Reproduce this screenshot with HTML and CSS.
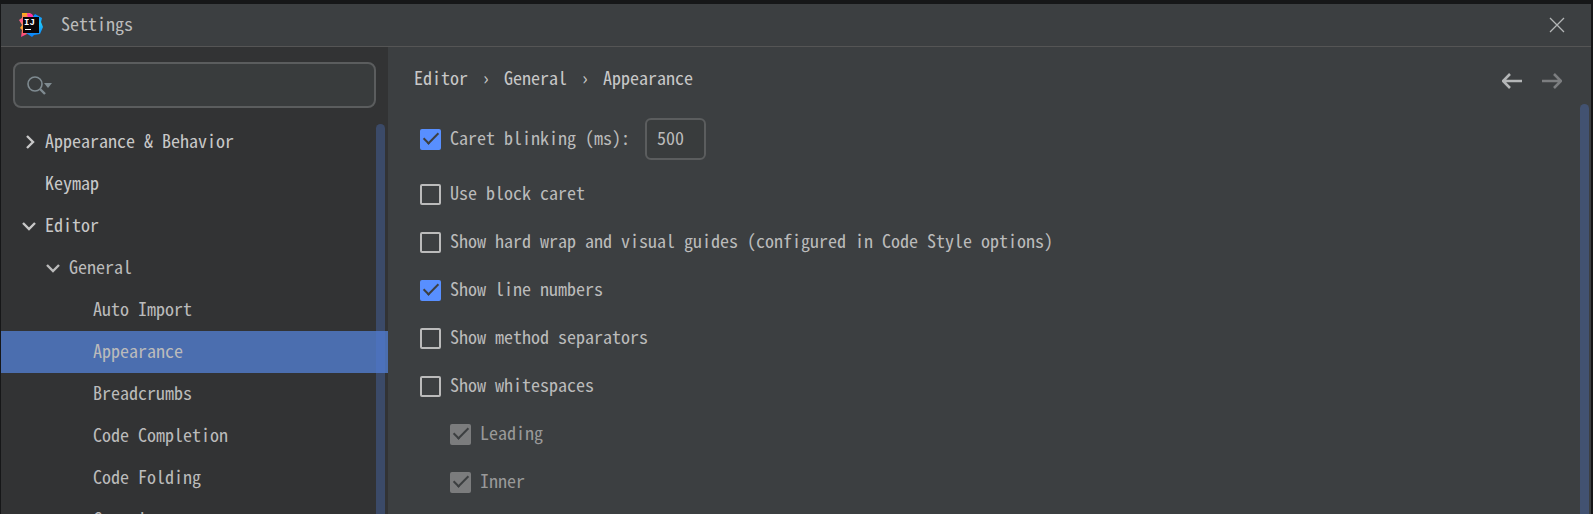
FILE: index.html
```
<!DOCTYPE html>
<html lang="en">
  <head>
    <meta charset="UTF-8" />
    <meta name="viewport" content="width=device-width, initial-scale=1.0" />
    <title>Settings</title>
    <link rel="stylesheet" href="styles.css">
  </head>
  <body>
    <div class="dialog">
      <header class="title-bar">
        <svg class="logo" viewBox="0 0 24 24" aria-hidden="true">
          <defs>
            <linearGradient id="warm" x1="0" y1="0" x2="0" y2="1">
              <stop offset="0" stop-color="#fdb60d" />
              <stop offset="0.3" stop-color="#ff5a8e" />
              <stop offset="0.6" stop-color="#ffa62e" />
              <stop offset="1" stop-color="#fe2f95" />
            </linearGradient>
            <linearGradient id="cool" x1="0" y1="0" x2="0" y2="1">
              <stop offset="0" stop-color="#087cfa" />
              <stop offset="0.4" stop-color="#21c8fb" />
              <stop offset="1" stop-color="#087cfa" />
            </linearGradient>
          </defs>
          <path d="M3 0h8l5 5-2 13-12 6 1-7-2-2 2-3-3-5 3-2z" fill="url(#warm)" />
          <path d="M8 0l5 1 2 4-6 1z" fill="#fe2fa5" />
          <path d="M13 5l3-4 7 4-1 4 2 5-3 7-6 1-2 2-6-4z" fill="url(#cool)" />
          <path d="M4 4h16v16H4z" fill="#0a0508" />
          <text class="logo-text" x="5" y="12">IJ</text>
          <path d="M6 16h6v1H6z" fill="#fff" />
        </svg>
        <h1 class="title">Settings</h1>
        <button class="icon-btn close" type="button" aria-label="Close">
          <svg width="16" height="16" viewBox="0 0 16 16"><path d="M1 1l14 14M15 1L1 15" stroke-width="1.3" /></svg>
        </button>
      </header>

      <div class="content">
        <aside class="sidebar">
          <div class="search">
            <svg width="26" height="20" viewBox="0 0 26 20" aria-hidden="true">
              <circle cx="9" cy="9" r="7" />
              <path d="M14 14l5 5" stroke-width="2.4" />
              <path class="fill" d="M18 8h8l-4 5z" />
            </svg>
            <input class="search-input" type="text" aria-label="Search settings" />
          </div>
          <nav class="tree-view">
            <ul class="tree">
              <li><a class="node root" href="#"><svg class="arrow" viewBox="0 0 14 14"><path d="M5 1l6 6-6 6" /></svg><span class="node-text">Appearance &amp; Behavior</span></a></li>
              <li><a class="node root" href="#"><span class="arrow"></span><span class="node-text">Keymap</span></a></li>
              <li><a class="node root" href="#"><svg class="arrow" viewBox="0 0 14 14"><path d="M1 4l6 6 6-6" /></svg><span class="node-text">Editor</span></a></li>
              <li><a class="node group" href="#"><svg class="arrow" viewBox="0 0 14 14"><path d="M1 4l6 6 6-6" /></svg><span class="node-text">General</span></a></li>
              <li><a class="node leaf" href="#"><span class="node-text">Auto Import</span></a></li>
              <li><a class="node leaf selected" href="#" aria-current="page"><span class="node-text">Appearance</span></a></li>
              <li><a class="node leaf" href="#"><span class="node-text">Breadcrumbs</span></a></li>
              <li><a class="node leaf" href="#"><span class="node-text">Code Completion</span></a></li>
              <li><a class="node leaf" href="#"><span class="node-text">Code Folding</span></a></li>
              <li><a class="node leaf" href="#"><span class="node-text">Console</span></a></li>
            </ul>
            <div class="scrollbar"></div>
          </nav>
        </aside>

        <main class="page">
          <div class="page-header">
            <nav class="breadcrumbs">
              <a href="#">Editor</a>
              <span class="separator">›</span>
              <a href="#">General</a>
              <span class="separator">›</span>
              <a href="#">Appearance</a>
            </nav>
            <div class="history">
              <button class="icon-btn" type="button" aria-label="Back">
                <svg width="20" height="16" viewBox="0 0 20 16"><path d="M20 8H2M8 1L1 8l7 7" stroke-width="2.6" /></svg>
              </button>
              <button class="icon-btn" type="button" aria-label="Forward" disabled>
                <svg width="20" height="16" viewBox="0 0 20 16"><path d="M0 8h18M12 1l7 7-7 7" stroke-width="2.6" /></svg>
              </button>
            </div>
          </div>

          <form class="options">
            <div class="option with-field">
              <input type="checkbox" id="caret-blinking" checked />
              <label for="caret-blinking">Caret blinking (ms):</label>
              <input class="text-input" type="text" value="500" aria-label="Caret blinking period" />
            </div>
            <div class="option">
              <input type="checkbox" id="block-caret" />
              <label for="block-caret">Use block caret</label>
            </div>
            <div class="option">
              <input type="checkbox" id="hard-wrap" />
              <label for="hard-wrap">Show hard wrap and visual guides (configured in Code Style options)</label>
            </div>
            <div class="option">
              <input type="checkbox" id="line-numbers" checked />
              <label for="line-numbers">Show line numbers</label>
            </div>
            <div class="option">
              <input type="checkbox" id="method-separators" />
              <label for="method-separators">Show method separators</label>
            </div>
            <div class="option">
              <input type="checkbox" id="whitespaces" />
              <label for="whitespaces">Show whitespaces</label>
            </div>
            <div class="option nested">
              <input type="checkbox" id="leading" checked disabled />
              <label for="leading">Leading</label>
            </div>
            <div class="option nested">
              <input type="checkbox" id="inner" checked disabled />
              <label for="inner">Inner</label>
            </div>
          </form>
          <div class="scrollbar page-scrollbar"></div>
        </main>
      </div>
    </div>
  </body>
</html>
```

FILE: styles.css
```
*,
*::before {
  box-sizing: border-box;
  margin: 0;
  padding: 0;
}

body {
  background: #161718;
  color: #bbb;
  font-family: 'Noto Sans Mono CJK SC', 'Liberation Mono', monospace;
  font-size: 18px;
  line-height: 24px;
  height: 100vh;
  overflow: hidden;
  padding: 4px 2px 0 1px;
}

a {
  color: inherit;
  text-decoration: none;
}

svg {
  display: block;
  fill: none;
  stroke: currentColor;
}

.dialog {
  background: #3c3f41;
  display: flex;
  flex-direction: column;
  height: 100%;
}

/* Title bar */
.title-bar {
  border-bottom: 1px solid #555;
  display: flex;
  align-items: center;
  flex-shrink: 0;
  height: 43px;
  padding: 0 18px;
}

.logo {
  height: 24px;
  width: 24px;
  margin-right: 18px;
  stroke: none;
}

.logo-text {
  fill: #fff;
  font: bold 9px 'Liberation Mono', monospace;
}

.title {
  flex: 1;
  font-size: 18px;
  font-weight: normal;
  padding-bottom: 4px;
}

.icon-btn {
  background: none;
  border: 0;
  color: #b4b6b7;
  cursor: pointer;
  padding: 0 8px;
}

.icon-btn:disabled {
  color: #7c7e80;
}

.close {
  padding: 8px;
}

.content {
  display: flex;
  flex: 1;
  min-height: 0;
}

/* Sidebar */
.sidebar {
  background: #323334;
  display: flex;
  flex-direction: column;
  flex: 0 0 387px;
}

.search {
  background: #393c3d;
  border: 2px solid #5b5d5e;
  border-radius: 8px;
  color: #7f8b91;
  display: flex;
  align-items: center;
  flex-shrink: 0;
  gap: 8px;
  height: 46px;
  margin: 15px 12px 13px;
  padding: 0 11px;
}

.search svg {
  stroke-width: 1.6;
}

.search .fill {
  fill: currentColor;
  stroke: none;
}

.search-input {
  background: none;
  border: 0;
  color: #bbb;
  flex: 1;
  font: inherit;
  min-width: 0;
  outline: 0;
}

.tree-view {
  flex: 1;
  min-height: 0;
  overflow: hidden;
  position: relative;
}

.tree {
  list-style: none;
}

.node {
  display: flex;
  align-items: center;
  height: 42px;
  white-space: nowrap;
}

.node-text,
.option label {
  padding-bottom: 5px;
}

.root {
  color: #c8c8c8;
  font-weight: 500;
  padding-left: 21px;
}

.group {
  padding-left: 45px;
}

.leaf {
  padding-left: 92px;
}

.selected {
  background: #4b6eaf;
}

.arrow {
  height: 14px;
  width: 14px;
  margin-right: 9px;
  stroke-width: 2.4;
}

.scrollbar {
  background: rgba(78, 120, 212, 0.33);
  border-radius: 5px;
  position: absolute;
  top: 3px;
  right: 3px;
  bottom: -8px;
  width: 9px;
}

/* Page */
.page {
  flex: 1;
  min-width: 0;
  overflow: hidden;
  position: relative;
}

.page-header {
  display: flex;
  align-items: center;
  justify-content: space-between;
  padding: 18px 21px 0 26px;
}

.breadcrumbs {
  color: #c8c8c8;
  display: flex;
  font-weight: 500;
  padding-bottom: 8px;
}

.separator {
  text-align: center;
  width: 36px;
}

.history {
  display: flex;
  gap: 4px;
}

.options {
  padding: 21px 32px 0;
}

.option {
  display: flex;
  align-items: center;
  gap: 9px;
  height: 48px;
}

.with-field {
  height: 42px;
  margin-bottom: 10px;
}

.nested {
  color: #999;
  padding-left: 30px;
}

.option input[type='checkbox'] {
  appearance: none;
  border: 2px solid #bbb;
  border-radius: 2px;
  flex-shrink: 0;
  height: 21px;
  width: 21px;
}

.option input[type='checkbox']:checked {
  background: #588fff;
  border: 0;
}

.option input[type='checkbox']:checked:disabled {
  background: #7b7c7d;
}

/* Tick */
.option input[type='checkbox']:checked::before {
  border: solid #3c3f41;
  border-width: 0 2px 2px 0;
  content: '';
  display: block;
  height: 15px;
  margin: 0 0 0 7px;
  transform: rotate(45deg);
  width: 8px;
}

.text-input {
  background: #393c3d;
  border: 2px solid #5b5d5e;
  border-radius: 6px;
  color: #bbb;
  font: inherit;
  height: 42px;
  margin-left: 6px;
  padding: 0 10px 5px;
  width: 61px;
}

.page-scrollbar {
  top: 57px;
  right: 2px;
}
```
